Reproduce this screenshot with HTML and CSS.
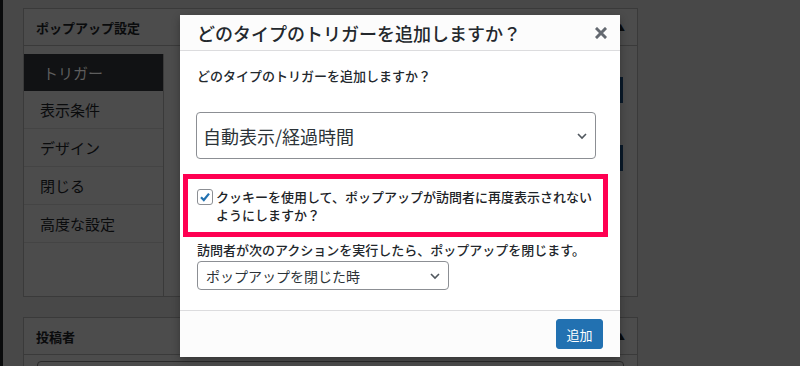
FILE: index.html
```html
<!DOCTYPE html>
<html lang="ja">
<head>
  <meta charset="UTF-8" />
  <meta name="viewport" content="width=device-width, initial-scale=1.0"/>
  <title>ポップアップ設定</title>
  <link rel="stylesheet" href="styles.css">
</head>
<body>
  <div class="admin-menu"></div>
  <div class="content">
    <div class="box">
      <div class="box-head">
        <h3>ポップアップ設定</h3>
        <span class="toggle">▲</span>
      </div>
      <div class="box-body">
        <ul class="tabs">
          <li class="active">トリガー</li>
          <li>表示条件</li>
          <li>デザイン</li>
          <li>閉じる</li>
          <li>高度な設定</li>
        </ul>
        <div class="panel">
          <div class="peek peek-1"></div>
          <div class="peek peek-2"></div>
        </div>
      </div>
    </div>

    <div class="box box-author">
      <div class="box-head">
        <h3>投稿者</h3>
        <span class="toggle">▲</span>
      </div>
      <div class="author-body">
        <div class="author-input"></div>
      </div>
    </div>
  </div>

  <!-- modal dialog over the dimmed admin page -->
  <div class="modal">
    <div class="modal-head">
      <h2>どのタイプのトリガーを追加しますか？</h2>
      <svg class="close" width="12" height="12" viewBox="0 0 12 12">
        <path d="M2 2 L10 10 M10 2 L2 10" stroke="#646970" stroke-width="3" stroke-linecap="square"/>
      </svg>
    </div>
    <div class="modal-body">
      <p class="question">どのタイプのトリガーを追加しますか？</p>

      <div class="select select-big">
        <span>自動表示/経過時間</span>
        <svg width="14" height="14" viewBox="0 0 14 14"><path d="M3 5 L7 9 L11 5" fill="none" stroke="#50575e" stroke-width="1.6"/></svg>
      </div>

      <div class="highlight">
        <span class="checkbox">
          <svg width="14" height="14" viewBox="0 0 14 14"><path d="M3 7.2 L5.8 10 L11 3.6" fill="none" stroke="#2271b1" stroke-width="2.2"/></svg>
        </span>
        <p>クッキーを使用して、ポップアップが訪問者に再度表示されないようにしますか？</p>
      </div>

      <p class="label">訪問者が次のアクションを実行したら、ポップアップを閉じます。</p>
      <div class="select select-small">
        <span>ポップアップを閉じた時</span>
        <svg width="14" height="14" viewBox="0 0 14 14"><path d="M3 5 L7 9 L11 5" fill="none" stroke="#50575e" stroke-width="1.6"/></svg>
      </div>
    </div>
    <div class="modal-foot">
      <button class="btn-primary">追加</button>
    </div>
  </div>
</body>
</html>
```

FILE: styles.css
```css
body {
  margin: 0;
  width: 800px;
  height: 366px;
  overflow: hidden;
  background-color: #484848;
  font-family: "Noto Sans CJK JP", "Noto Sans", sans-serif;
  color: #1d2327;
  position: relative;
  display: flex;
}

.admin-menu {
  width: 3px;
  flex-shrink: 0;
  background: #0a0b0c;
}

.content {
  padding: 8px 0 0 20px;
  width: 615px;
  height: 358px;
  overflow: hidden;
}

.box {
  border: 1px solid #3a3a3a;
  background: #4c4c4c;
}

.box-head {
  height: 36px;
  border-bottom: 1px solid #3a3a3a;
  display: flex;
  align-items: center;
  justify-content: space-between;
  padding: 0 12px;
}

.box-head h3 {
  margin: 0;
  font-size: 13px;
  font-weight: bold;
  color: #0a0b0c;
}

.toggle {
  font-size: 9px;
  color: #0a0b0c;
}

.box-body {
  display: flex;
  height: 250px;
}

.tabs {
  list-style: none;
  margin: 8px 0 0;
  padding: 0;
  width: 139px;
  border-right: 1px solid #3a3a3a;
}

.tabs li {
  height: 37px;
  border-bottom: 1px solid #444;
  font-size: 15px;
  color: #0a0b0c;
  display: flex;
  align-items: center;
  padding-left: 16px;
}

.tabs li.active {
  background: #111214;
  color: #5e5e5e;
  padding-left: 19px;
  border-bottom: none;
  height: 37px;
}

.panel {
  flex: 1;
  position: relative;
}

.peek {
  position: absolute;
  right: 14px;
  width: 30px;
  height: 26px;
  background: #0a1a2a;
}

.peek-1 { top: 31px; }
.peek-2 { top: 99px; }

.box-author {
  margin-top: 20px;
}

.author-body {
  padding: 6px 13px;
}

.author-input {
  height: 30px;
  border: 1px solid #2a2a2a;
  border-radius: 4px;
}

.modal {
  position: absolute;
  left: 180px;
  top: 15px;
  width: 440px;
  height: 342px;
  background: #fff;
  box-shadow: 0 3px 8px rgba(0,0,0,0.3);
  display: flex;
  flex-direction: column;
}

.modal-head {
  height: 35px;
  border-bottom: 1px solid #dcdcde;
  background: #fcfcfc;
  display: flex;
  align-items: center;
  justify-content: space-between;
  padding: 0 13px 0 17px;
}

.modal-head h2 {
  margin: 0;
  font-size: 18px;
  font-weight: 500;
  color: #23282d;
}

.modal-body {
  flex: 1;
  padding: 0 16px;
}

.question {
  margin: 16px 0 0 1px;
  font-size: 13px;
  line-height: 18px;
  font-weight: 500;
  color: #23282d;
}

.select {
  border: 1px solid #8c8f94;
  border-radius: 4px;
  display: flex;
  align-items: center;
  justify-content: space-between;
  background: #fff;
  color: #2c3338;
  box-sizing: border-box;
}

.select-big {
  margin-top: 27px;
  width: 400px;
  height: 47px;
  padding: 0 6px 0 6px;
  font-size: 18px;
}

.select-small {
  margin-top: 2px;
  margin-left: 1px;
  width: 252px;
  height: 29px;
  padding: 0 6px 0 8px;
  font-size: 14px;
}

.highlight {
  margin: 15px -4px 0 -13px;
  border: 5px solid #ff0052;
  padding: 9px 6px 8px 9px;
  display: flex;
  align-items: flex-start;
  gap: 3px;
}

.highlight p {
  margin: 0;
  font-size: 13px;
  line-height: 18px;
  color: #1d2327;
  font-weight: 500;
}

.checkbox {
  width: 14px;
  height: 14px;
  border: 1px solid #8c8f94;
  border-radius: 3px;
  flex-shrink: 0;
  margin-top: 1px;
  display: flex;
  align-items: center;
  justify-content: center;
}

.label {
  margin: 4px 0 0 1px;
  font-size: 13px;
  line-height: 18px;
  font-weight: 500;
  color: #23282d;
}

.modal-foot {
  height: 46px;
  border-top: 1px solid #dcdcde;
  background: #fcfcfc;
  display: flex;
  align-items: center;
  justify-content: flex-end;
  padding-right: 17px;
}

.btn-primary {
  background: #2271b1;
  color: #fff;
  border: 1px solid #2271b1;
  border-radius: 3px;
  width: 47px;
  height: 30px;
  font-family: inherit;
  font-size: 13px;
  padding: 0;
}
```
